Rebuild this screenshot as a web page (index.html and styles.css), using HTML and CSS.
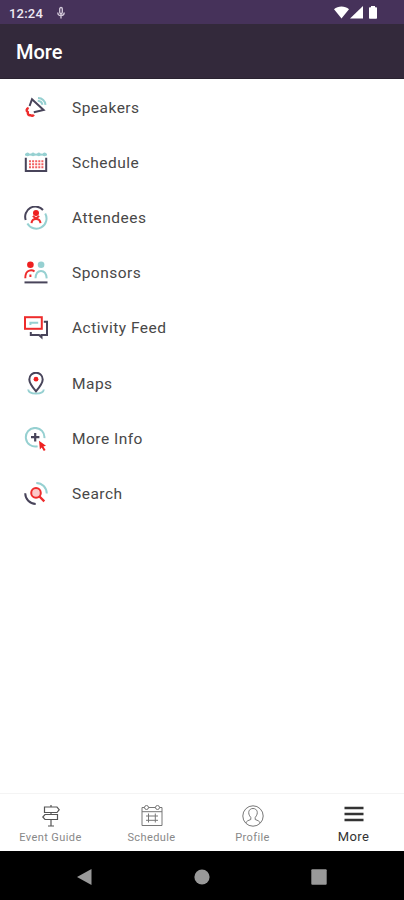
FILE: index.html
```html
<!DOCTYPE html>
<html lang="en">
<head>
<meta charset="utf-8">
<title>More</title>
<link rel="stylesheet" href="styles.css">
</head>
<body>

<div class="status-bar">
  <span class="time">12:24</span>
  <svg class="status-mic" viewBox="0 0 10 14">
    <path d="M5 7v5.5M1.8 6.5c0 4.2 6.4 4.2 6.4 0" />
    <rect x="3.7" y="1.5" width="2.6" height="6" rx="1.3" />
  </svg>
  <svg class="status-icons" viewBox="0 0 46 16">
    <path d="M0 4.2C4 .6 11 .6 15 4.2L7.5 13.5z" />
    <path d="M29 1v12.5H16z" />
    <path d="M37 1h4v1.2h1.2q.8 0 .8.8v10q0 .8-.8.8h-6.4q-.8 0-.8-.8V3q0-.8.8-.8H37z" />
  </svg>
</div>

<header class="app-bar">
  <h1>More</h1>
</header>

<ul class="menu">
  <li>
    <svg viewBox="0 0 24 24">
      <path class="dark" d="M5.6 10L8 3.2 19.6 14 9.8 16.2" />
      <path class="red thick" d="M4.6 11.8c-2.4 1-2.6 3-.8 4.2-.2 2.4.8 3.6 2.8 3.2 1.2 1 2.4.8 3.2-.6" />
      <path class="teal" d="M14 1.9c4.4.2 7 3 7.5 7M13.7 4.7c2.7.2 4.3 1.8 4.8 4" />
    </svg>
    <span>Speakers</span>
  </li>
  <li>
    <svg viewBox="0 0 24 24">
      <path class="teal" d="M1 3.6h22" />
      <path class="teal dots" d="M3.5 3.4h.1M9 3.4h.1M14.8 3.4h.1M20.5 3.4h.1" />
      <path class="dark" d="M1.8 6.7v13.2h20.4V6.7" />
      <path class="red dash" d="M5 10.2h14.5M5 13.2h14.5M5 16.2h14.5" />
    </svg>
    <span>Schedule</span>
  </li>
  <li>
    <svg viewBox="0 0 24 24">
      <path class="dark" d="M1.7 14A10.2 10.2 0 0 1 19 4" />
      <path class="teal" d="M21.2 7.5A10.2 10.2 0 0 1 3.4 17.5" />
      <circle class="red-fill" cx="12" cy="7" r="3" />
      <path class="red" d="M7.5 17.2c.2-2.6 1.4-4.3 4.5-4.3s4.3 1.7 4.5 4.3M8.8 10l3.2 2.2 3.2-2.2" />
    </svg>
    <span>Attendees</span>
  </li>
  <li>
    <svg viewBox="0 0 24 24">
      <circle class="red-fill" cx="6.4" cy="3.8" r="3.3" />
      <circle class="teal-fill" cx="17.1" cy="3.8" r="3.3" />
      <path class="red" d="M1.3 17.3c0-4 1.1-7 4-7.7 2-.5 3.7-.3 5.2.9M6.4 16v-2.4" />
      <path class="teal" d="M11.5 17.3c.3-4.6 2-7.3 5.5-7.3s5.3 2.7 5.7 7.3" />
      <path class="dark" d="M.5 21.4h23" />
    </svg>
    <span>Sponsors</span>
  </li>
  <li>
    <svg viewBox="0 0 24 24">
      <path class="dark" d="M19.8 5.8h3.2v13.2h-5.5v2.2l-2.5-2.2H6.8V16" />
      <rect class="red" x="1" y="1.2" width="16.8" height="11.6" />
      <path class="teal" d="M6.4 9V6.8h7.8" />
    </svg>
    <span>Activity Feed</span>
  </li>
  <li>
    <svg viewBox="0 0 24 24">
      <path class="teal" d="M4.2 17.5c.6 5.4 15 5.4 15.6 0" />
      <path class="dark" d="M12 19.3C8 14.5 5.3 11.3 5.3 7.4a6.7 6.7 0 0 1 13.4 0c0 3.9-2.7 7.1-6.7 11.9z" />
      <circle class="red-fill" cx="12" cy="7.2" r="2.4" />
    </svg>
    <span>Maps</span>
  </li>
  <li>
    <svg viewBox="0 0 24 24">
      <path class="teal" d="M13.6 19.2a9.3 9.3 0 1 1 6.8-8" />
      <path class="dark plus" d="M11.2 6v8.4M7 10.2h8.4" />
      <path class="red-fill" d="M15 13.8l7 5-2.6.7 2.2 3.4-1.8 1.1-2.1-3.4-1.8 1.8z" />
    </svg>
    <span>More Info</span>
  </li>
  <li>
    <svg viewBox="0 0 24 24">
      <path class="teal" d="M12.3 1c6 0 10.3 4.6 10.5 10.5" />
      <path class="dark" d="M1.2 11.3c.2 6 4.5 10.4 10.5 10.6" />
      <circle class="red pale" cx="12" cy="10.9" r="4.8" />
      <path class="red thick" d="M15.5 14.5l4.8 4.8" />
    </svg>
    <span>Search</span>
  </li>
</ul>

<nav class="tabs">
  <a class="tab">
    <svg viewBox="0 0 24 24">
      <path d="M12 1v2M12 8.5v2M12 15.5V22M9 22h6M5.5 3H18l2.2 2.7L18 8.5H5.5zM6 10.5h12.5v5H6l-2.2-2.5z" />
    </svg>
    <span>Event Guide</span>
  </a>
  <a class="tab">
    <svg viewBox="0 0 24 24">
      <path d="M4.5 3.5H2v18h20v-18h-2.5M8.5 3.5h7M2 7.7h20M6 12h12M6 16.3h12M8.5 9.5v9M15.3 9.5v9" />
      <circle cx="6.5" cy="3.5" r="2" />
      <circle cx="17.5" cy="3.5" r="2" />
    </svg>
    <span>Schedule</span>
  </a>
  <a class="tab">
    <svg viewBox="0 0 24 24">
      <circle cx="12" cy="12" r="10.2" />
      <path d="M4.8 19c.8-2 2.2-2.4 5-3.5v-2c-3.8-4.5-2-9 2.2-9s6 4.5 2.2 9v2c2.8 1.1 4.2 1.5 5 3.5" />
    </svg>
    <span>Profile</span>
  </a>
  <a class="tab active">
    <svg viewBox="0 0 24 24">
      <path d="M2.5 4h19M2.5 10h19M2.5 16h19" />
    </svg>
    <span>More</span>
  </a>
</nav>

<div class="system-nav">
  <svg viewBox="0 0 16 16"><path d="M0 8L14.5 0v16z" /></svg>
  <svg viewBox="0 0 16 16"><circle cx="8" cy="8" r="7.6" /></svg>
  <svg viewBox="0 0 16 16"><rect x=".3" y=".3" width="15.4" height="15.4" rx="1" /></svg>
</div>

</body>
</html>
```

FILE: styles.css
```css
body {
  margin: 0;
  height: 900px;
  display: flex;
  flex-direction: column;
  overflow: hidden;
  background: #fff;
  font-family: Roboto, sans-serif;
}
svg {
  display: block;
}

/* top bars */
.status-bar {
  height: 24px;
  display: flex;
  align-items: center;
  box-sizing: border-box;
  padding: 2px 24px 0 9px;
  background: #46325a;
  color: #eee8f2;
}
.time {
  width: 47px;
  font-size: 13px;
  font-weight: 500;
  letter-spacing: 0.2px;
}
.status-mic {
  width: 10px;
  height: 14px;
  fill: none;
  stroke: #d4cadb;
  stroke-width: 1.3;
}
.status-icons {
  width: 46px;
  height: 16px;
  margin-left: auto;
  fill: #fff;
}
.app-bar {
  height: 55px;
  box-sizing: border-box;
  display: flex;
  align-items: center;
  padding: 2px 0 0 16px;
  background: #33293b;
  border-bottom: 1px solid #2a2230;
}
.app-bar h1 {
  margin: 0;
  font-size: 20px;
  font-weight: 500;
  line-height: 24px;
  color: #fff;
}

/* menu list */
.menu {
  flex: 1;
  margin: 0;
  padding: 1.5px 0 0;
  list-style: none;
}
.menu li {
  height: 55.1px;
  display: flex;
  align-items: center;
  gap: 24px;
  padding-left: 24px;
  font-size: 15.5px;
  letter-spacing: 0.48px;
  color: #484848;
}
.menu svg {
  width: 24px;
  height: 24px;
  fill: none;
  stroke-width: 2;
}
.dark { stroke: #48445a; }
.red { stroke: #ee2c2c; }
.teal { stroke: #96d0d1; }
.red-fill { fill: #ee2020; }
.teal-fill { fill: #96d0d1; }
.pale { fill: #fbc9c9; }
.menu .thick { stroke-width: 2.4; }
.menu .plus { stroke-width: 2.2; }
.menu .dots {
  stroke-width: 3.6;
  stroke-linecap: round;
}
.menu .dash {
  stroke-width: 2;
  stroke-dasharray: 2 1.1;
  opacity: 0.75;
}

/* bottom tabs */
.tabs {
  height: 58px;
  box-sizing: border-box;
  display: grid;
  grid-template-columns: repeat(4, 1fr);
  border-top: 1px solid #f4f4f4;
}
.tab {
  display: flex;
  flex-direction: column;
  align-items: center;
  padding-top: 10px;
  font-size: 11px;
  letter-spacing: 0.4px;
  line-height: 16px;
  color: #888;
}
.tab svg {
  width: 24px;
  height: 24px;
  margin-bottom: 2px;
  fill: none;
  stroke: #777;
  stroke-width: 1;
}
.tab:first-child svg {
  stroke: #555;
  stroke-width: 1.2;
}
.active {
  font-size: 13px;
  color: #333;
}
.active svg {
  margin-bottom: 1px;
  stroke: #333;
  stroke-width: 2.6;
}

.system-nav {
  height: 49px;
  display: flex;
  justify-content: space-between;
  align-items: center;
  box-sizing: border-box;
  padding: 3px 77px 0;
  background: #000;
}
.system-nav svg {
  width: 16px;
  height: 16px;
  fill: #999;
}
```
